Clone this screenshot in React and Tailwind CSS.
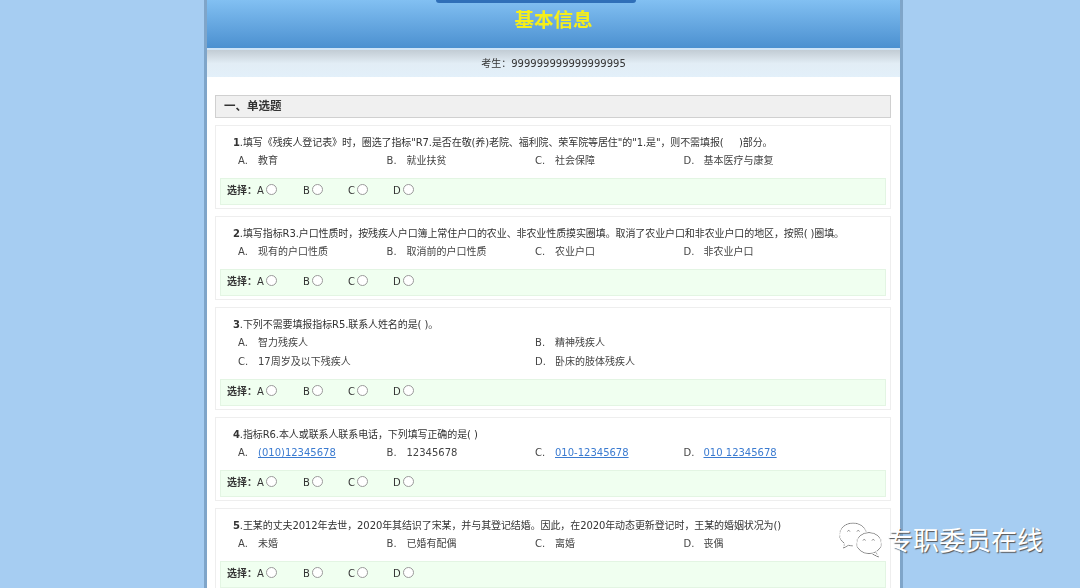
const cjk = { fontFamily: '"DejaVu Sans", "Noto Sans CJK SC", sans-serif' };

function Radio({ label, width }) {
  return (
    <span className={`flex items-center ${width}`}>
      <span className="text-[10px]">{label}</span>
      <span className="ml-[2px] -mt-[3px] w-[11px] h-[11px] rounded-full border border-[#9a9a9a] bg-white"></span>
    </span>
  );
}

function Answer() {
  return (
    <div className="mx-[4px] h-[27px] bg-[#f0fff0] border border-[#e3f5e3] flex items-center pl-[6px] pb-[2px] text-[#333]">
      <b className="text-[10px] w-[30px] shrink-0 whitespace-nowrap">{"选择\uFF1A"}</b>
      <Radio label="A" width="w-[46px]" />
      <Radio label="B" width="w-[45px]" />
      <Radio label="C" width="w-[45px]" />
      <Radio label="D" width="w-[40px]" />
    </div>
  );
}

function Option({ letter, text, link, wide }) {
  return (
    <div className={`flex whitespace-nowrap ${wide ? "w-[297px]" : "w-[148.5px]"}`}>
      <span className="w-[20px] shrink-0">{letter}.</span>
      {link ? <a className="text-[#3b7bd0] underline">{text}</a> : <span>{text}</span>}
    </div>
  );
}

function Card({ num, title, options, rows }) {
  return (
    <div className="mt-[7px] border border-[#eeeeee] bg-white pt-[10px] pb-[3px]">
      <div className="pl-[17px] text-[10px] leading-[14px] tracking-[-0.1px] text-[#333] whitespace-pre">
        <b>{num}</b>.{title}
      </div>
      <div className="mt-[4px] pl-[22px] text-[10px] leading-[14px] text-[#444]">
        {rows ? (
          rows.map((r, i) => (
            <div key={i} className="flex h-[19px]">
              {r.map((o) => <Option key={o[0]} letter={o[0]} text={o[1]} wide />)}
            </div>
          ))
        ) : (
          <div className="flex h-[19px]">
            {options.map((o) => <Option key={o[0]} letter={o[0]} text={o[1]} link={o[2]} />)}
          </div>
        )}
      </div>
      <div className="mt-[5px]"><Answer /></div>
    </div>
  );
}

export default function App() {
  return (
    <div className="relative h-[588px] overflow-hidden bg-[#a6cdf2]" style={cjk}>
      <div className="ml-[204px] w-[699px] h-[588px] border-x-[3px] border-[#7fa5c9] bg-white overflow-hidden">
        {/* header */}
        <div className="relative h-[48px] bg-gradient-to-b from-[#82c0f2] to-[#4b90d0] flex justify-center pt-[9px]">
          <div className="absolute top-0 left-[229px] w-[200px] h-[3px] rounded-b-md bg-[#2f6fb8]"></div>
          <span className="text-[19.5px] leading-[24px] font-bold text-[#f6ee1a] blur-[0.3px]">基本信息</span>
        </div>
        <div className="h-[2px] bg-[#cfe4f7]"></div>
        <div className="h-[27px] bg-gradient-to-b from-[#c2ccd4] via-[#e2edf5] to-[#e3f0fa] flex justify-center items-center text-[10px] text-[#333]">
          <span className="blur-[0.3px]">{"考生\uFF1A999999999999999995"}</span>
        </div>

        {/* questions */}
        <div className="pl-[8px] pr-[9px] pt-[18px] h-[511px] overflow-hidden blur-[0.3px]">
          <div className="h-[23px] bg-[#f0f0f0] border border-[#d0d0d0] flex items-center pl-[8px] pt-[1px] text-[11.5px] font-bold text-[#333]">
            一、单选题
          </div>
          <Card
            num="1"
            title={"填写《残疾人登记表》时\uFF0C圈选了指标\"R7.是否在敬(养)老院、福利院、荣军院等居住\"的\"1.是\"\uFF0C则不需填报(     )部分。"}
            options={[["A", "教育"], ["B", "就业扶贫"], ["C", "社会保障"], ["D", "基本医疗与康复"]]}
          />
          <Card
            num="2"
            title={"填写指标R3.户口性质时\uFF0C按残疾人户口簿上常住户口的农业、非农业性质摸实圈填。取消了农业户口和非农业户口的地区\uFF0C按照( )圈填。"}
            options={[["A", "现有的户口性质"], ["B", "取消前的户口性质"], ["C", "农业户口"], ["D", "非农业户口"]]}
          />
          <Card
            num="3"
            title="下列不需要填报指标R5.联系人姓名的是( )。"
            rows={[
              [["A", "智力残疾人"], ["B", "精神残疾人"]],
              [["C", "17周岁及以下残疾人"], ["D", "卧床的肢体残疾人"]],
            ]}
          />
          <Card
            num="4"
            title={"指标R6.本人或联系人联系电话\uFF0C下列填写正确的是( )"}
            options={[["A", "(010)12345678", true], ["B", "12345678"], ["C", "010-12345678", true], ["D", "010 12345678", true]]}
          />
          <Card
            num="5"
            title={"王某的丈夫2012年去世\uFF0C2020年其结识了宋某\uFF0C并与其登记结婚。因此\uFF0C在2020年动态更新登记时\uFF0C王某的婚姻状况为()"}
            options={[["A", "未婚"], ["B", "已婚有配偶"], ["C", "离婚"], ["D", "丧偶"]]}
          />
        </div>
      </div>

      {/* watermark */}
      <div className="absolute left-[838px] top-[520px] flex items-center">
        <svg width="46" height="38" viewBox="0 0 46 38" fill="none" stroke="#fff" strokeWidth="1" style={{ filter: "drop-shadow(0 1px 0.6px rgba(70,70,70,.7))" }}>
          <path d="M15 2C7.5 2 1.5 7.2 1.5 13.5c0 3.6 2 6.8 5 8.8L5.5 27l5-2.8c1.4.4 2.8.6 4.3.6" />
          <path d="M15 2c6.500 0 12 3.800 13.300 9" />
          <ellipse cx="31" cy="22" rx="12.500" ry="10.500" />
          <path d="M38 31l2.500 5-6-3" />
          <path d="M9.500 10.500c.4-1.600 2-1.600 2.400 0M19 10.500c.4-1.600 2-1.600 2.400 0M25 19.500c.4-1.600 2-1.600 2.400 0M34 19.500c.4-1.600 2-1.600 2.400 0" />
        </svg>
        <span className="ml-[3px] text-[26px] leading-[30px] text-white [text-shadow:1px_1px_1px_#555]" style={{ fontFamily: '"Noto Sans CJK SC", sans-serif' }}>专职委员在线</span>
      </div>
    </div>
  );
}
